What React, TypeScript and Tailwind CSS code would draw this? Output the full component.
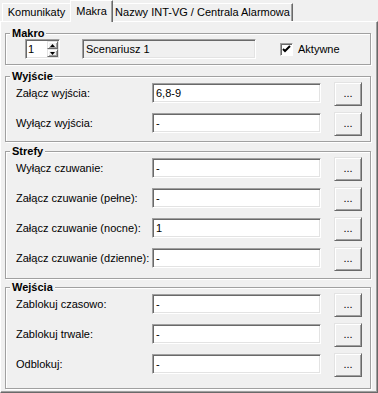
import type { ReactNode } from 'react'

// klasyczne ramki Windows
const sunken =
  'border border-t-[#a0a0a0] border-l-[#a0a0a0] border-r-white border-b-white shadow-[inset_1px_1px_0_#696969,inset_-1px_-1px_0_#e3e3e3]'
const raised =
  'border border-t-[#e3e3e3] border-l-[#e3e3e3] border-r-[#696969] border-b-[#696969] shadow-[inset_1px_1px_0_#ffffff,inset_-1px_-1px_0_#a0a0a0]'

function Group({ title, className, children }: { title: string; className?: string; children: ReactNode }) {
  return (
    <fieldset
      className={`border border-[#a0a0a0] shadow-[1px_1px_0_#ffffff,inset_1px_1px_0_#ffffff] ${className ?? ''}`}
    >
      <legend className="ml-[4px] px-[2px] font-bold leading-[13px] bg-[#f0f0f0]">{title}</legend>
      {children}
    </fieldset>
  )
}

function Browse() {
  return (
    <button
      className={`ml-[13px] w-[28px] h-[24px] bg-[#f0f0f0] flex items-end justify-center pb-[6px] text-[11px] leading-none ${raised}`}
    >
      ...
    </button>
  )
}

function Row({ label, value }: { label: string; value: string }) {
  return (
    <div className="flex items-start h-[24px]">
      <span className="w-[136px] mt-[5px] leading-[13px] whitespace-nowrap">{label}</span>
      <div className={`mt-[1px] w-[169px] h-[20px] bg-white flex items-center pl-[3px] ${sunken}`}>{value}</div>
      <Browse />
    </div>
  )
}

function Rows({ rows }: { rows: [string, string][] }) {
  return (
    <div className="flex flex-col gap-[6px] pl-[10px] mt-[-1px]">
      {rows.map(([l, v]) => (
        <Row key={l} label={l} value={v} />
      ))}
    </div>
  )
}

function Spinner() {
  return (
    <div className={`w-[35px] h-[20px] bg-white flex items-stretch ${sunken}`}>
      <span className="flex-1 pl-[2px] flex items-center">1</span>
      <div className="w-[11px] flex flex-col my-[1px] mr-[1px]">
        <div className={`flex-1 bg-[#f0f0f0] flex items-center justify-center ${raised}`}>
          <svg width="5" height="3" viewBox="0 0 5 3">
            <path d="M2.5 0 L5 3 L0 3 Z" fill="#000" />
          </svg>
        </div>
        <div className={`flex-1 bg-[#f0f0f0] flex items-center justify-center ${raised}`}>
          <svg width="5" height="3" viewBox="0 0 5 3">
            <path d="M0 0 L5 0 L2.5 3 Z" fill="#000" />
          </svg>
        </div>
      </div>
    </div>
  )
}

export default function App() {
  return (
    <div className="w-[378px] h-[393px] bg-[#f0f0f0] text-black text-[11px] leading-[13px] font-['Liberation_Sans',Arial,sans-serif] flex flex-col">
      {/* zakładki */}
      <div className="flex items-end h-[21px] pl-[2px] relative z-10">
        <div className="w-[68px] h-[18px] flex items-center justify-center border-t border-l border-t-white border-l-white">
          Komunikaty
        </div>
        <div className="w-[43px] h-[22px] -mb-[1px] bg-[#f0f0f0] flex items-start justify-center pt-[4px] border-t border-l border-r border-t-white border-l-white border-r-[#696969] shadow-[inset_-1px_0_0_#a0a0a0]">
          Makra
        </div>
        <div className="w-[180px] h-[18px] flex items-center justify-center border-t border-r border-t-white border-r-[#696969] shadow-[inset_-1px_0_0_#a0a0a0]">
          Nazwy INT-VG / Centrala Alarmowa
        </div>
      </div>

      {/* panel */}
      <div className="h-[372px] border-t border-l border-r border-b border-t-white border-l-white border-r-[#696969] border-b-[#696969] shadow-[inset_-1px_-1px_0_#a0a0a0] pl-[4px] pr-[6px] pt-[5px]">
        <Group title="Makro" className="pb-[5px]">
          <div className="flex items-center h-[20px] mt-[-1px] pl-[19px]">
            <Spinner />
            <div className={`ml-[22px] w-[174px] h-[20px] flex items-center pl-[3px] ${sunken}`}>Scenariusz 1</div>
            <div className="ml-[24px] w-[13px] h-[13px] bg-white border border-t-[#a0a0a0] border-l-[#a0a0a0] border-r-white border-b-white shadow-[inset_1px_1px_0_#696969] flex items-center justify-center">
              <svg width="9" height="9" viewBox="0 0 9 9">
                <path d="M1 4 L3 6 L8 1" fill="none" stroke="#000" strokeWidth="2" />
              </svg>
            </div>
            <span className="ml-[5px]">Aktywne</span>
          </div>
        </Group>

        <Group title="Wyjście" className="mt-[5px] pb-[5px]">
          <Rows
            rows={[
              ['Załącz wyjścia:', '6,8-9'],
              ['Wyłącz wyjścia:', '-'],
            ]}
          />
        </Group>

        <Group title="Strefy" className="mt-[3px] pb-[7px]">
          <Rows
            rows={[
              ['Wyłącz czuwanie:', '-'],
              ['Załącz czuwanie (pełne):', '-'],
              ['Załącz czuwanie (nocne):', '1'],
              ['Załącz czuwanie (dzienne):', '-'],
            ]}
          />
        </Group>

        <Group title="Wejścia" className="mt-[2px] pb-[11px]">
          <Rows
            rows={[
              ['Zablokuj czasowo:', '-'],
              ['Zablokuj trwale:', '-'],
              ['Odblokuj:', '-'],
            ]}
          />
        </Group>
      </div>
    </div>
  )
}
